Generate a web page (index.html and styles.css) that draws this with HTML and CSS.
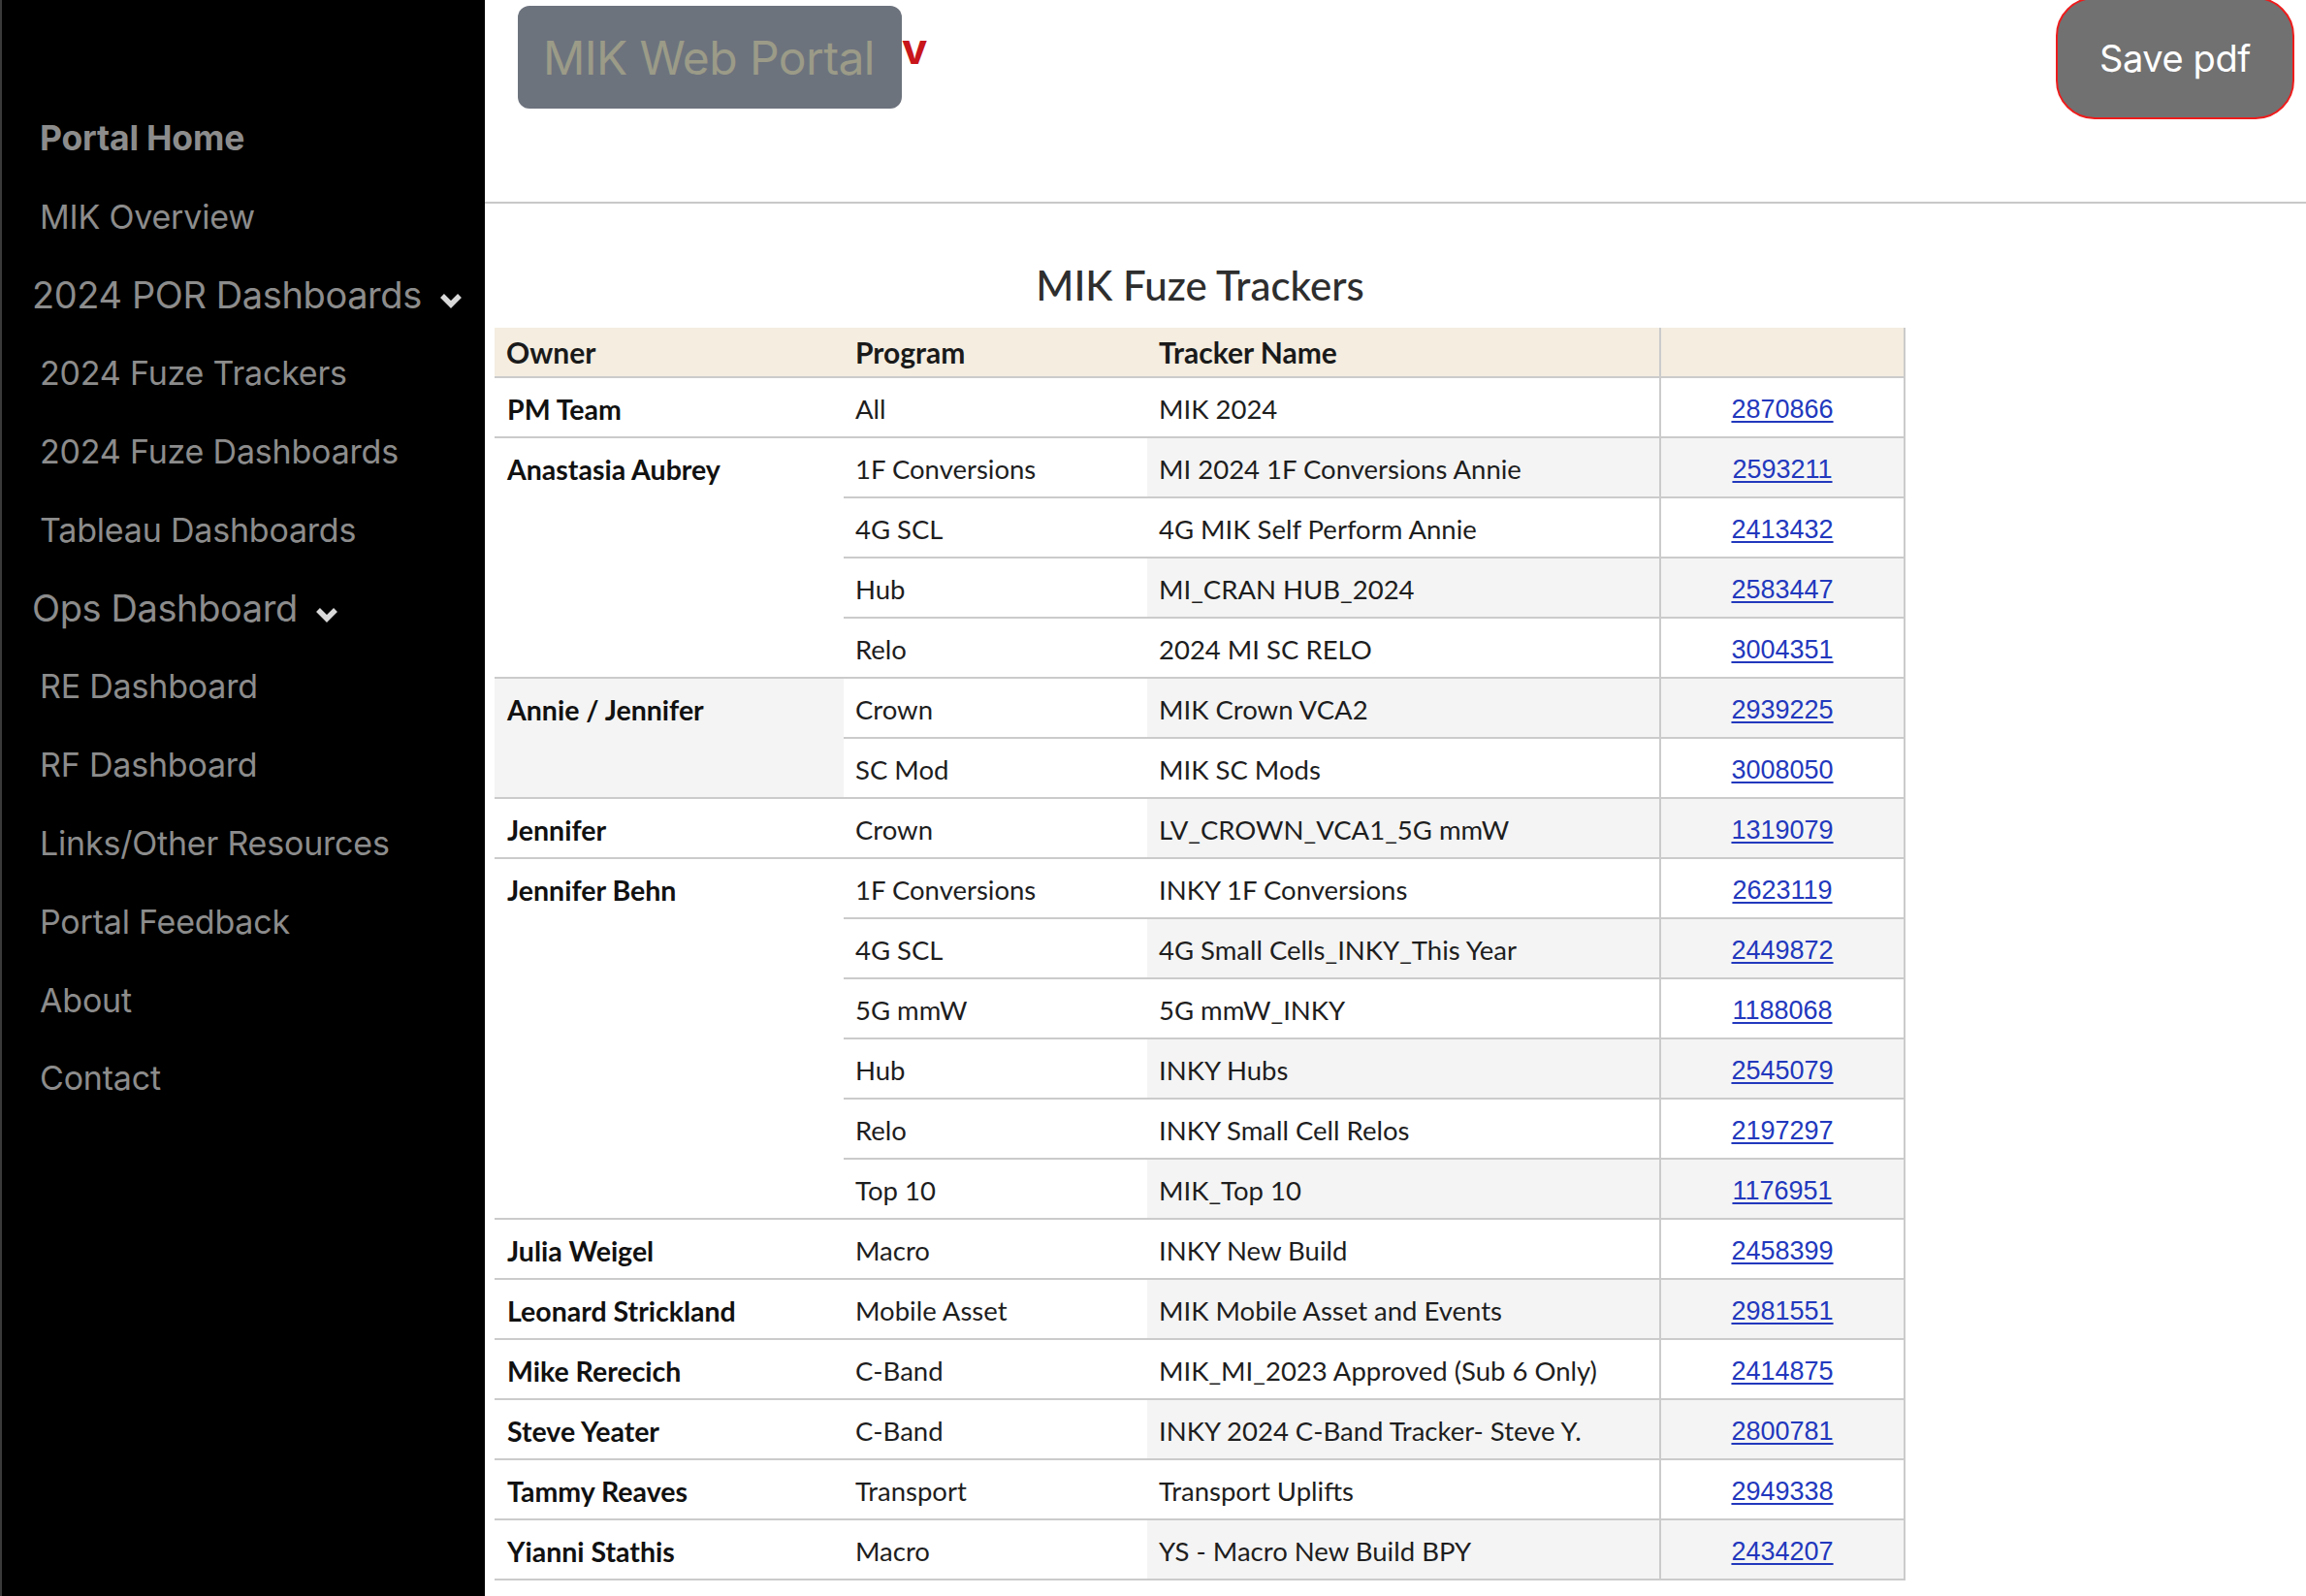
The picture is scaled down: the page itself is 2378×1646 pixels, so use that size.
FILE: index.html
```html
<!DOCTYPE html>
<html lang="en">
<head>
<meta charset="utf-8">
<title>MIK Fuze Trackers</title>
<link rel="stylesheet" href="styles.css">
</head>
<body>
<div class="layout">
  <aside class="sidebar">
    <nav class="nav">
      <a class="nav-item nav-home" href="#">Portal Home</a>
      <a class="nav-item" href="#">MIK Overview</a>
      <a class="nav-item nav-drop" href="#">2024 POR Dashboards
        <svg class="chev" viewBox="0 0 24 17" width="24" height="17"><polyline points="3,3 12,12 21,3" fill="none" stroke="#d9d9d9" stroke-width="5.5" stroke-linejoin="miter"/></svg>
      </a>
      <a class="nav-item" href="#">2024 Fuze Trackers</a>
      <a class="nav-item" href="#">2024 Fuze Dashboards</a>
      <a class="nav-item" href="#">Tableau Dashboards</a>
      <a class="nav-item nav-drop" href="#">Ops Dashboard
        <svg class="chev" viewBox="0 0 24 17" width="24" height="17"><polyline points="3,3 12,12 21,3" fill="none" stroke="#d9d9d9" stroke-width="5.5" stroke-linejoin="miter"/></svg>
      </a>
      <a class="nav-item" href="#">RE Dashboard</a>
      <a class="nav-item" href="#">RF Dashboard</a>
      <a class="nav-item" href="#">Links/Other Resources</a>
      <a class="nav-item" href="#">Portal Feedback</a>
      <a class="nav-item" href="#">About</a>
      <a class="nav-item" href="#">Contact</a>
    </nav>
  </aside>
  <main class="main">
    <header class="topbar">
      <div class="brand-wrap">
        <div class="brand">MIK Web Portal</div>
        <span class="brand-v">v</span>
      </div>
      <button class="save-btn" type="button">Save pdf</button>
    </header>
    <section class="content">
      <table class="trackers">
        <caption class="trackers-title">MIK Fuze Trackers</caption>
        <colgroup>
          <col class="c-owner">
          <col class="c-prog">
          <col class="c-trk">
          <col class="c-lnk">
        </colgroup>
        <thead>
          <tr>
            <th>Owner</th>
            <th>Program</th>
            <th>Tracker Name</th>
            <th class="lnk"></th>
          </tr>
        </thead>
        <tbody>
          <tr><td class="owner">PM Team</td><td>All</td><td class="trk">MIK 2024</td><td class="lnk"><a href="#">2870866</a></td></tr>
          <tr><td class="owner" rowspan="4">Anastasia Aubrey</td><td>1F Conversions</td><td class="trk">MI 2024 1F Conversions Annie</td><td class="lnk"><a href="#">2593211</a></td></tr>
          <tr><td>4G SCL</td><td class="trk">4G MIK Self Perform Annie</td><td class="lnk"><a href="#">2413432</a></td></tr>
          <tr><td>Hub</td><td class="trk">MI_CRAN HUB_2024</td><td class="lnk"><a href="#">2583447</a></td></tr>
          <tr><td>Relo</td><td class="trk">2024 MI SC RELO</td><td class="lnk"><a href="#">3004351</a></td></tr>
          <tr><td class="owner owner-shaded" rowspan="2">Annie / Jennifer</td><td>Crown</td><td class="trk">MIK Crown VCA2</td><td class="lnk"><a href="#">2939225</a></td></tr>
          <tr><td>SC Mod</td><td class="trk">MIK SC Mods</td><td class="lnk"><a href="#">3008050</a></td></tr>
          <tr><td class="owner">Jennifer</td><td>Crown</td><td class="trk">LV_CROWN_VCA1_5G mmW</td><td class="lnk"><a href="#">1319079</a></td></tr>
          <tr><td class="owner" rowspan="6">Jennifer Behn</td><td>1F Conversions</td><td class="trk">INKY 1F Conversions</td><td class="lnk"><a href="#">2623119</a></td></tr>
          <tr><td>4G SCL</td><td class="trk">4G Small Cells_INKY_This Year</td><td class="lnk"><a href="#">2449872</a></td></tr>
          <tr><td>5G mmW</td><td class="trk">5G mmW_INKY</td><td class="lnk"><a href="#">1188068</a></td></tr>
          <tr><td>Hub</td><td class="trk">INKY Hubs</td><td class="lnk"><a href="#">2545079</a></td></tr>
          <tr><td>Relo</td><td class="trk">INKY Small Cell Relos</td><td class="lnk"><a href="#">2197297</a></td></tr>
          <tr><td>Top 10</td><td class="trk">MIK_Top 10</td><td class="lnk"><a href="#">1176951</a></td></tr>
          <tr><td class="owner">Julia Weigel</td><td>Macro</td><td class="trk">INKY New Build</td><td class="lnk"><a href="#">2458399</a></td></tr>
          <tr><td class="owner">Leonard Strickland</td><td>Mobile Asset</td><td class="trk">MIK Mobile Asset and Events</td><td class="lnk"><a href="#">2981551</a></td></tr>
          <tr><td class="owner">Mike Rerecich</td><td>C-Band</td><td class="trk">MIK_MI_2023 Approved (Sub 6 Only)</td><td class="lnk"><a href="#">2414875</a></td></tr>
          <tr><td class="owner">Steve Yeater</td><td>C-Band</td><td class="trk">INKY 2024 C-Band Tracker- Steve Y.</td><td class="lnk"><a href="#">2800781</a></td></tr>
          <tr><td class="owner">Tammy Reaves</td><td>Transport</td><td class="trk">Transport Uplifts</td><td class="lnk"><a href="#">2949338</a></td></tr>
          <tr><td class="owner">Yianni Stathis</td><td>Macro</td><td class="trk">YS - Macro New Build BPY</td><td class="lnk"><a href="#">2434207</a></td></tr>
        </tbody>
      </table>
    </section>
  </main>
</div>
</body>
</html>
```

FILE: styles.css
```css
* { box-sizing: border-box; }

html, body {
  margin: 0;
  padding: 0;
  height: 100%;
  background: #ffffff;
  font-family: Inter, "Liberation Sans", Arial, sans-serif;
  overflow: hidden;
}

.layout {
  display: flex;
  min-height: 100vh;
}

/* ---------- sidebar ---------- */
.sidebar {
  width: 500px;
  flex: 0 0 500px;
  background: #000000;
  border-left: 2px solid #3a3a3a;
  min-height: 100vh;
}

.nav {
  display: flex;
  flex-direction: column;
  padding-top: 102px;
}

.nav-item {
  display: flex;
  align-items: center;
  height: 80.8px;
  padding-left: 39px;
  color: #8c8c8c;
  text-decoration: none;
  font-size: 34px;
  font-weight: 400;
  letter-spacing: -0.2px;
  white-space: nowrap;
}

.nav-home {
  font-weight: 700;
  font-size: 35.5px;
}

.nav-drop {
  padding-left: 31px;
  font-size: 38px;
  letter-spacing: -0.4px;
}

.chev {
  margin-left: 18px;
  margin-top: 14px;
  flex: 0 0 auto;
}

/* ---------- main ---------- */
.main {
  flex: 1 1 auto;
  display: flex;
  flex-direction: column;
  min-width: 0;
}

.topbar {
  height: 210px;
  border-bottom: 2px solid #c8c8c8;
  display: flex;
  justify-content: space-between;
  align-items: flex-start;
  padding: 0 12px 0 34px;
}

.brand-wrap {
  display: flex;
  align-items: flex-start;
}

.brand {
  margin-top: 6px;
  width: 396px;
  height: 106px;
  border-radius: 12px;
  background: #6d737d;
  color: #9b9b88;
  font-size: 48px;
  letter-spacing: -0.6px;
  display: flex;
  align-items: center;
  padding-left: 26px;
  white-space: nowrap;
}

.brand-v {
  margin-top: 28px;
  color: #c8161b;
  font-weight: 700;
  font-size: 44px;
  line-height: 44px;
}

.save-btn {
  margin-top: -3px;
  width: 246px;
  height: 126px;
  border: 2px solid #ee1c1c;
  border-radius: 40px;
  background: #717171;
  color: #ffffff;
  font-family: Inter, "Liberation Sans", Arial, sans-serif;
  font-size: 38px;
  letter-spacing: -0.4px;
  padding: 0;
  cursor: pointer;
}

/* ---------- table ---------- */
.content {
  padding: 60px 0 0 10px;
}

.trackers {
  width: 1455px;
  table-layout: fixed;
  border-collapse: separate;
  border-spacing: 0;
  font-family: Lato, "Open Sans", sans-serif;
  font-size: 27.5px;
  color: #1e1e1e;
}

.trackers-title {
  font-family: Lato, "Open Sans", sans-serif;
  font-size: 42px;
  font-weight: 500;
  line-height: 48px;
  color: #2e2e2e;
  padding-bottom: 20px;
  text-align: center;
}

.c-owner { width: 360px; }
.c-prog { width: 313px; }
.c-trk { width: 528px; }
.c-lnk { width: 254px; }

.trackers th {
  height: 52px;
  line-height: 50px;
  padding: 0 12px;
  text-align: left;
  font-size: 30px;
  font-weight: 700;
  background: #f4ede0;
  border-bottom: 2px solid #cbcbcb;
  color: #1a1a1a;
  overflow: hidden;
}

.trackers td {
  height: 62px;
  line-height: 56px;
  padding: 4px 12px 0;
  vertical-align: top;
  border-bottom: 2px solid #cbcbcb;
  white-space: nowrap;
  overflow: hidden;
}

.trackers td.owner {
  font-weight: 700;
  font-size: 28.5px;
  color: #111111;
  padding-left: 13px;
}

.trackers td.owner-shaded {
  background: #f4f4f4;
}

.trackers .lnk {
  text-align: center;
  font-family: "Liberation Sans", Arial, sans-serif;
  font-size: 27px;
  border-left: 2px solid #cbcbcb;
  border-right: 2px solid #cbcbcb;
}

.trackers tbody tr:nth-child(even) td.trk,
.trackers tbody tr:nth-child(even) td.lnk {
  background: #f4f4f4;
}

.trackers .lnk a {
  color: #2238bd;
  text-decoration: underline;
  text-underline-offset: 3px;
}
```
